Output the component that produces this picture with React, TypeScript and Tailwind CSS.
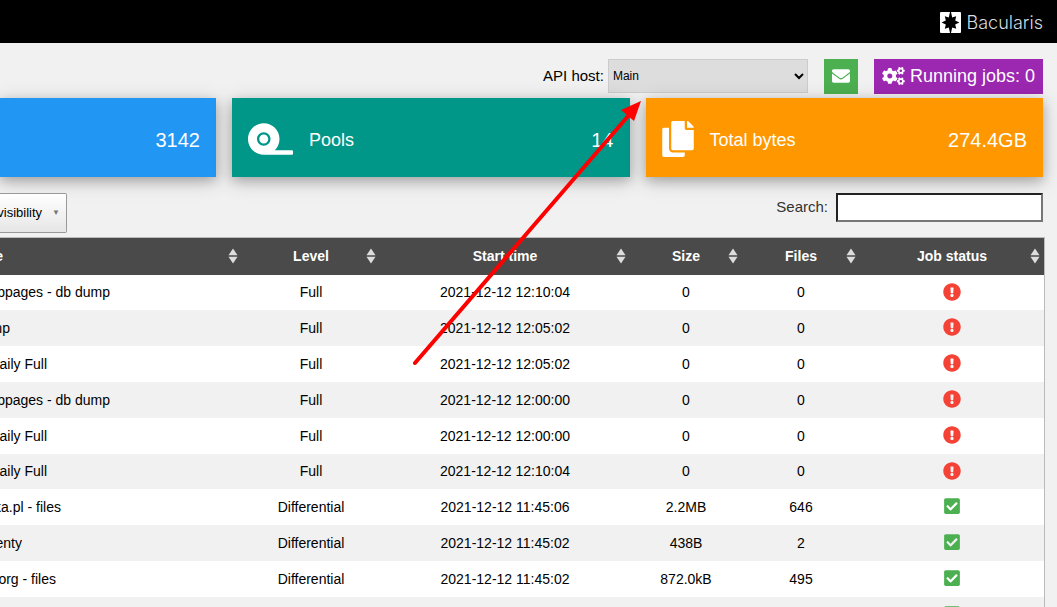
import { useState } from 'react';
import type { ReactNode } from 'react';
import {
  FaCheckSquare,
  FaCogs,
  FaCopy,
  FaEnvelope,
  FaExclamationCircle,
  FaTape,
} from 'react-icons/fa';

interface Job {
  name: string;
  nameWidth: string;
  level: string;
  startTime: string;
  size: string;
  files: number;
  ok: boolean;
}

const jobs: Job[] = [
  { name: 'bpages - db dump', nameWidth: 'w-[110px]', level: 'Full', startTime: '2021-12-12 12:10:04', size: '0', files: 0, ok: false },
  { name: 'mp', nameWidth: 'w-[10px]', level: 'Full', startTime: '2021-12-12 12:05:02', size: '0', files: 0, ok: false },
  { name: 'aily Full', nameWidth: 'w-[47px]', level: 'Full', startTime: '2021-12-12 12:05:02', size: '0', files: 0, ok: false },
  { name: 'bpages - db dump', nameWidth: 'w-[110px]', level: 'Full', startTime: '2021-12-12 12:00:00', size: '0', files: 0, ok: false },
  { name: 'aily Full', nameWidth: 'w-[47px]', level: 'Full', startTime: '2021-12-12 12:00:00', size: '0', files: 0, ok: false },
  { name: 'aily Full', nameWidth: 'w-[47px]', level: 'Full', startTime: '2021-12-12 12:10:04', size: '0', files: 0, ok: false },
  { name: 'ka.pl - files', nameWidth: 'w-[61px]', level: 'Differential', startTime: '2021-12-12 11:45:06', size: '2.2MB', files: 646, ok: true },
  { name: 'enty', nameWidth: 'w-[22px]', level: 'Differential', startTime: '2021-12-12 11:45:02', size: '438B', files: 2, ok: true },
  { name: 'org - files', nameWidth: 'w-[56px]', level: 'Differential', startTime: '2021-12-12 11:45:02', size: '872.0kB', files: 495, ok: true },
  { name: 'org - files', nameWidth: 'w-[56px]', level: 'Differential', startTime: '2021-12-12 11:45:02', size: '0', files: 0, ok: true },
];

function Logo() {
  return (
    <a href="#" className="flex items-center gap-1.5">
      <svg viewBox="0 0 21 21" className="h-[21px] w-[21px]" aria-hidden="true">
        <rect width="21" height="21" rx="1" fill="#fff" />
        <path
          fill="#000"
          d="M10 0 H11 L12.2 5.4 L16.2 4.2 L15.2 8.4 L19.4 10.5 L15.2 12.6 L16.2 16.8 L12.2 15.6 L11 21 H10 L8.8 15.6 L4.8 16.8 L5.8 12.6 L1.6 10.5 L5.8 8.4 L4.8 4.2 L8.8 5.4 Z"
        />
      </svg>
      <span className="font-['Inter',sans-serif] text-lg font-light text-[#d5dde0]">Bacularis</span>
    </a>
  );
}

function SortIcon() {
  return (
    <svg viewBox="0 0 10 16" className="h-4 w-2.5 shrink-0" fill="#ddd" aria-hidden="true">
      <path d="M5 0.5 L9.5 7.3 H0.5 Z" />
      <path d="M5 15.5 L9.5 8.7 H0.5 Z" />
    </svg>
  );
}

function HeaderCell({ children }: { children: ReactNode }) {
  return (
    <th scope="col" className="px-1 pb-0.5 font-bold">
      <div className="flex items-center pl-2.5">
        <span className="flex-1 text-center">{children}</span>
        <SortIcon />
      </div>
    </th>
  );
}

interface StatCardProps {
  className: string;
  icon?: ReactNode;
  title?: string;
  value: string;
}

function StatCard({ className, icon, title, value }: StatCardProps) {
  return (
    <section
      className={`flex h-[79px] items-center gap-4 px-4 pt-1 text-white shadow-[0_4px_10px_0_rgba(0,0,0,0.2),0_4px_20px_0_rgba(0,0,0,0.19)] ${className}`}
    >
      {icon && <div className="pb-0.5">{icon}</div>}
      {title && <h4 className="text-lg">{title}</h4>}
      <span className="ml-auto text-xl">{value}</span>
    </section>
  );
}

export default function App() {
  const [search, setSearch] = useState('');

  return (
    <div className="relative h-screen overflow-hidden bg-[#f1f1f1] font-['Liberation_Sans',Arial,sans-serif] text-[15px] text-black">
      <header className="flex h-[43px] items-center justify-end bg-black pt-0.5 pr-3.5">
        <Logo />
      </header>

      <div className="mt-4 mr-3.5 flex h-[35px] items-start justify-end gap-4">
        <div className="flex items-center gap-1">
          <label htmlFor="api-host">API host:</label>
          <select
            id="api-host"
            className="h-[34px] w-[200px] border border-[#ccc] bg-[#ddd] text-xs"
          >
            <option>Main</option>
          </select>
        </div>
        <button
          type="button"
          aria-label="Messages"
          className="flex h-full items-center bg-[#4caf50] px-2 pb-0.5 text-lg text-white"
        >
          <FaEnvelope />
        </button>
        <button
          type="button"
          className="flex h-full items-center gap-[5px] bg-[#9c27b0] px-2 pb-0.5 text-lg text-white"
        >
          <FaCogs className="h-[18px] w-[23px]" />
          Running jobs: 0
        </button>
      </div>

      {/* Summary cards */}
      <div className="relative mt-1 mr-3.5 flex gap-4">
        <StatCard className="w-[216px] bg-[#2196f3]" value="3142" />
        <StatCard
          className="flex-1 bg-[#009688]"
          icon={<FaTape className="h-9 w-[45px]" />}
          title="Pools"
          value="14"
        />
        <StatCard
          className="flex-1 bg-[#ff9800]"
          icon={<FaCopy className="h-9 w-8" />}
          title="Total bytes"
          value="274.4GB"
        />
      </div>

      {/* Table tools */}
      <div className="relative mt-4 mr-3.5 flex items-start justify-between">
        <button
          type="button"
          className="flex h-10 w-[67px] items-center justify-end gap-2.5 overflow-hidden rounded-r-xs border border-l-0 border-[#999] bg-linear-to-b from-white to-[#e6e6e6] pr-1.5 text-[13px] whitespace-nowrap"
        >
          <span>visibility</span>
          <span className="text-[8px] text-[#777]">▼</span>
        </button>
        <div className="flex items-center gap-2">
          <label htmlFor="search" className="text-[#333]">
            Search:
          </label>
          <input
            id="search"
            type="search"
            value={search}
            onChange={(e) => setSearch(e.target.value)}
            className="h-[29px] w-[207px] border-2 border-t-[#222] border-r-[#767676] border-b-[#767676] border-l-[#222] bg-white px-1"
          />
        </div>
      </div>

      {/* Jobs */}
      <div className="mt-1 mr-3 border-t border-r border-[#bbb]">
        <table className="w-full table-fixed border-collapse text-center text-sm">
          <colgroup>
            <col />
            <col className="w-[138px]" />
            <col className="w-[250px]" />
            <col className="w-[112px]" />
            <col className="w-[118px]" />
            <col className="w-[184px]" />
          </colgroup>
          <thead>
            <tr className="h-[37px] bg-[#4a4a4a] text-white">
              <th scope="col" className="pr-1 pb-0.5 font-bold">
                <div className="flex items-center justify-between">
                  <span className="flex w-[3px] justify-end overflow-hidden">e</span>
                  <SortIcon />
                </div>
              </th>
              <HeaderCell>Level</HeaderCell>
              <HeaderCell>Start time</HeaderCell>
              <HeaderCell>Size</HeaderCell>
              <HeaderCell>Files</HeaderCell>
              <HeaderCell>Job status</HeaderCell>
            </tr>
          </thead>
          <tbody>
            {jobs.map((job, index) => (
              <tr
                key={index}
                className="h-9 odd:bg-white even:bg-[#f1f1f1] nth-[5n+1]:h-[35px]"
              >
                <td className="pb-px">
                  <div className={`flex justify-end overflow-hidden whitespace-nowrap ${job.nameWidth}`}>
                    <span>{job.name}</span>
                  </div>
                </td>
                <td className="pb-px">{job.level}</td>
                <td className="pb-px">{job.startTime}</td>
                <td className="pb-px">{job.size}</td>
                <td className="pb-px">{job.files}</td>
                <td className="pb-0.5">
                  {job.ok ? (
                    <FaCheckSquare className="mx-auto h-[18px] w-4 text-[#4caf50]" title="OK" />
                  ) : (
                    <FaExclamationCircle className="mx-auto h-[18px] w-[18px] text-[#f44336]" title="Error" />
                  )}
                </td>
              </tr>
            ))}
          </tbody>
        </table>
      </div>

      {/* Pointer to the API host list */}
      <svg
        viewBox="0 0 230 268"
        className="pointer-events-none absolute top-[99px] right-[414px] h-[268px] w-[230px]"
        aria-hidden="true"
      >
        <path d="M2 264 L216 16" stroke="#f00" strokeWidth="4" strokeLinecap="round" />
        <path d="M228 2 L208 11 L221 22 Z" fill="#f00" />
      </svg>
    </div>
  );
}
